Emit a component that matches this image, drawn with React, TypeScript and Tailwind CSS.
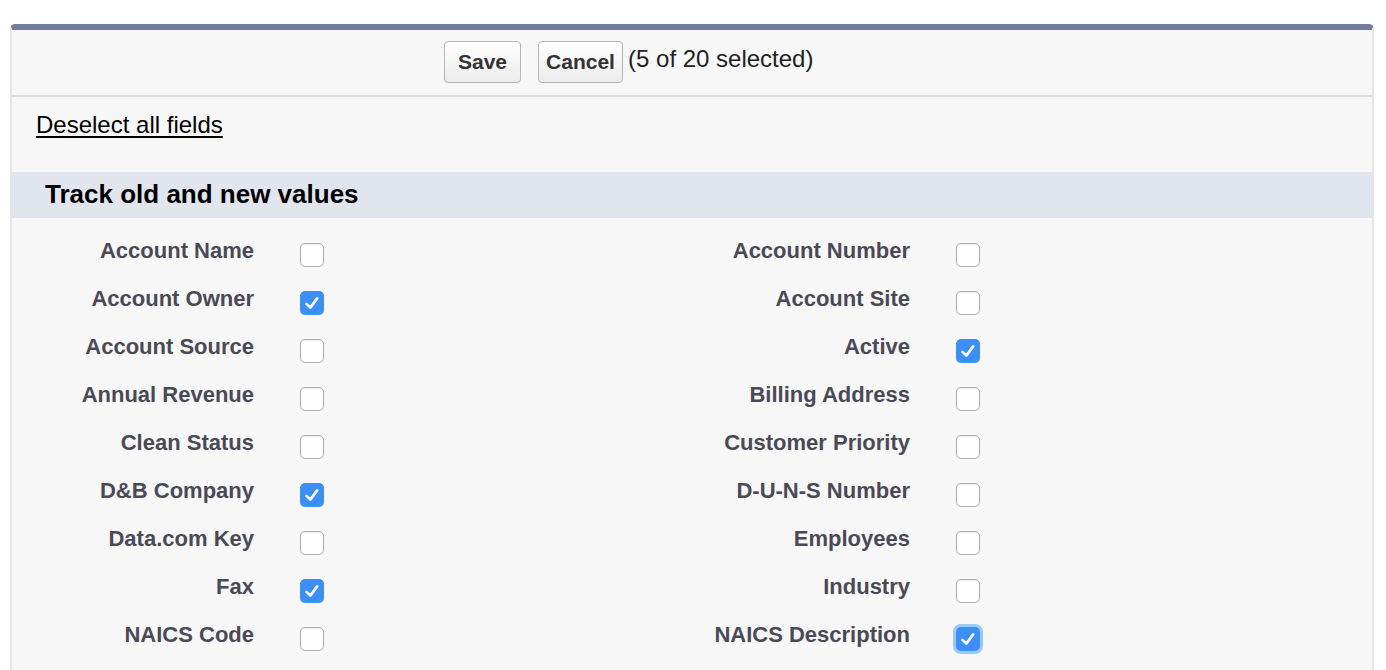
import { useState } from 'react';

type Field = {
  label: string;
  checked: boolean;
  focused?: boolean;
};

const initialFields: Field[] = [
  { label: 'Account Name', checked: false },
  { label: 'Account Number', checked: false },
  { label: 'Account Owner', checked: true },
  { label: 'Account Site', checked: false },
  { label: 'Account Source', checked: false },
  { label: 'Active', checked: true },
  { label: 'Annual Revenue', checked: false },
  { label: 'Billing Address', checked: false },
  { label: 'Clean Status', checked: false },
  { label: 'Customer Priority', checked: false },
  { label: 'D&B Company', checked: true },
  { label: 'D-U-N-S Number', checked: false },
  { label: 'Data.com Key', checked: false },
  { label: 'Employees', checked: false },
  { label: 'Fax', checked: true },
  { label: 'Industry', checked: false },
  { label: 'NAICS Code', checked: false },
  { label: 'NAICS Description', checked: true, focused: true },
];

const CheckBox = ({ field, onToggle }: { field: Field; onToggle: () => void }) => {
  if (field.checked) {
    return (
      <button
        onClick={onToggle}
        className={`mt-[4px] ml-[46px] flex h-[24px] w-[24px] shrink-0 items-center justify-center rounded-[5px] bg-[#3b8ff5] ${
          field.focused ? 'shadow-[0_0_0_3px_#9cc8f7]' : ''
        }`}
      >
        <svg width="24" height="24" viewBox="0 0 24 24" fill="none">
          <path d="M6.5 12.8 L10.3 16.6 L17.2 7.4" stroke="white" strokeWidth="2.6" strokeLinecap="round" strokeLinejoin="round" />
        </svg>
      </button>
    );
  }
  return (
    <button
      onClick={onToggle}
      className="mt-[4px] ml-[46px] h-[24px] w-[24px] shrink-0 rounded-[5px] border border-[#aeaeae] bg-white shadow-[inset_0_1px_1px_rgba(0,0,0,0.08)]"
    />
  );
};

export default function App() {
  const [fields, setFields] = useState<Field[]>(initialFields);
  const selected = fields.filter((f) => f.checked).length;

  const toggle = (i: number) => {
    setFields((prev) => prev.map((f, idx) => (idx === i ? { ...f, checked: !f.checked } : f)));
  };

  return (
    <div className="min-h-[670px] bg-white pt-[24px] pl-[10px] pr-[12px] font-['Liberation_Sans',Arial,sans-serif]">
      <div className="rounded-t-[5px] border-x-2 border-t-[6px] border-x-[#e6e6e6] border-t-[#737c98] bg-[#f7f7f7]">
        {/* button bar */}
        <div className="flex h-[67px] items-start border-b-2 border-[#dcdcdc] pt-[11px] pl-[432px]">
          <button className="h-[42px] w-[77px] rounded-[4px] border border-[#b5b5b5] bg-gradient-to-b from-white to-[#ececec] text-[21px] font-bold text-[#333]">
            Save
          </button>
          <button className="ml-[17px] h-[42px] w-[85px] rounded-[4px] border border-[#b5b5b5] bg-gradient-to-b from-white to-[#ececec] text-[21px] font-bold text-[#333]">
            Cancel
          </button>
          <span className="ml-[5px] mt-[4px] text-[24px] leading-[28px] text-[#222]">
            ({selected} of 20 selected)
          </span>
        </div>

        {/* deselect */}
        <div className="h-[75px] pt-[14px] pl-[24px]">
          <a href="#" className="text-[24px] leading-[28px] text-black underline underline-offset-[3px]">
            Deselect all fields
          </a>
        </div>

        {/* section header */}
        <div className="flex h-[46px] items-center bg-[#e1e5ee] pb-[2px] pl-[33px]">
          <h3 className="text-[26px] leading-[30px] font-bold text-black">Track old and new values</h3>
        </div>

        <div className="grid grid-cols-[656px_656px] pt-[21px]">
          {fields.map((field, i) => (
            <div key={field.label} className="flex h-[48px] items-start">
              <div className="w-[242px] text-right text-[22px] leading-[24px] font-bold text-[#4a4a57]">
                {field.label}
              </div>
              <CheckBox field={field} onToggle={() => toggle(i)} />
            </div>
          ))}
        </div>
      </div>
    </div>
  );
}
